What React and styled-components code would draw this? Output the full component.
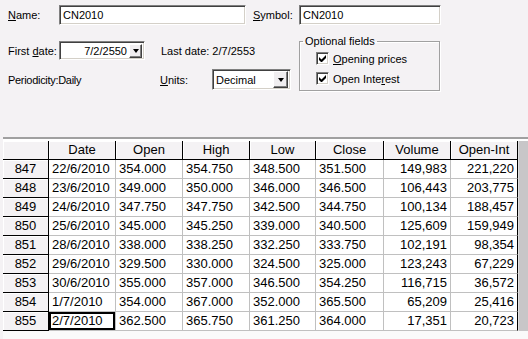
import React from 'react'
import styled, { createGlobalStyle } from 'styled-components'

const GlobalStyle = createGlobalStyle`
  html, body {
    margin: 0;
    padding: 0;
    background: #f4f2f4;
  }
  body {
    font-family: "Liberation Sans", Arial, sans-serif;
  }
`

const Window = styled.div`
  width: 528px;
  height: 339px;
  overflow: hidden;
  background: #f4f2f4;
  display: flex;
  flex-direction: column;
`

const Form = styled.div`
  height: 137px;
  flex: none;
  box-sizing: border-box;
  padding: 5px 0 0 8px;
  font-size: 11px;
  color: #000;
`

const Row = styled.div`
  display: flex;
  align-items: center;
  height: ${p => p.h || 20}px;
  margin-top: ${p => p.mt || 0}px;
`

const Label = styled.span`
  display: inline-block;
  width: ${p => (p.w ? `${p.w}px` : 'auto')};
  margin-left: ${p => p.ml || 0}px;
  letter-spacing: ${p => p.ls || 0}px;
  white-space: nowrap;
  flex: none;
`

const Sunken = styled.div`
  box-sizing: border-box;
  width: ${p => p.w}px;
  height: ${p => p.h || 20}px;
  background: #fff;
  border: 1px solid;
  border-color: #808080 #fff #fff #808080;
  box-shadow: inset 1px 1px 0 #404040, inset -1px -1px 0 #d4d0c8;
  display: flex;
  align-items: center;
  padding: 0 2px 0 3px;
  font-size: 11px;
  flex: none;
`

const DateText = styled.span`
  flex: 1;
  text-align: ${p => p.align || 'left'};
  padding-right: 2px;
`

const DropBtn = styled.div`
  box-sizing: border-box;
  width: ${p => p.w || 13}px;
  height: ${p => p.h || 14}px;
  background: #f0eef0;
  border: 1px solid;
  border-color: #fff #404040 #404040 #fff;
  box-shadow: inset -1px -1px 0 #808080;
  display: flex;
  align-items: center;
  justify-content: center;
  flex: none;
`

const Arrow = styled.span`
  width: 0;
  height: 0;
  border-left: 3.5px solid transparent;
  border-right: 3.5px solid transparent;
  border-top: 4px solid #000;
  margin-top: 1px;
`

const Lower = styled.div`
  display: flex;
  align-items: flex-start;
  margin-top: 16px;
`

const LeftBlock = styled.div`
  width: 291px;
  flex: none;
`

const Group = styled.fieldset`
  box-sizing: border-box;
  width: 141px;
  height: 56px;
  margin: -6px 0 0 0;
  padding: 0;
  border: 1px solid #a0a0a0;
  box-shadow: 1px 1px 0 #fff, inset 1px 1px 0 #fff;
  font-size: 11px;
`

const Legend = styled.legend`
  margin-left: 3px;
  padding: 0 2px;
  line-height: 13px;
`

const Check = styled.div`
  display: flex;
  align-items: center;
  height: 13px;
  padding-left: 16px;
  margin-top: ${p => p.mt}px;
`

const Box = styled.span`
  box-sizing: border-box;
  width: 13px;
  height: 13px;
  background: #fff;
  border: 1px solid;
  border-color: #808080 #fff #fff #808080;
  box-shadow: inset 1px 1px 0 #404040, inset -1px -1px 0 #d4d0c8;
  display: flex;
  align-items: center;
  justify-content: center;
  margin-right: 4px;
  flex: none;
`

const Splitter = styled.div`
  flex: none;
  margin-left: 3px;
  height: 2px;
  background: #a0a0a0;
  border-bottom: 2px solid #fff;
`

const GridArea = styled.div`
  flex: 1;
  display: flex;
  margin-left: 3px;
  background: #fafafa;
`

const Table = styled.div`
  width: 515px;
  flex: none;
  font-size: 13px;
  color: #000;
`

const Side = styled.div`
  flex: 1;
  height: 190px;
  background: #c8c6c8;
  border-left: 1px solid #e0e0e0;
`

const GridRow = styled.div`
  display: grid;
  grid-template-columns: 46px 67px 67px 67px 66px 68px 67px 67px;
  height: 19px;
`

const HeadCell = styled.div`
  box-sizing: border-box;
  background: #f4f2f4;
  border-right: 1px solid #000;
  border-bottom: 1px solid #000;
  box-shadow: inset 1px 1px 0 #fff;
  text-align: center;
  line-height: 18px;
  white-space: nowrap;
`

const Cell = styled.div`
  box-sizing: border-box;
  background: #fff;
  border-right: 1px solid ${p => (p.last ? '#000' : '#c0c0c0')};
  border-bottom: 1px solid #c0c0c0;
  padding: 0 3px;
  text-align: ${p => (p.right ? 'right' : 'left')};
  line-height: 18px;
  white-space: nowrap;
  box-shadow: ${p => (p.selected ? 'inset 0 0 0 2px #000' : 'none')};
`

const CheckMark = () => (
  <svg width="7" height="7" viewBox="0 0 7 7">
    <path d="M0 2v3l2 2h1l4-4V0L2.5 4.5z" fill="#000" />
  </svg>
)

const columns = ['Date', 'Open', 'High', 'Low', 'Close', 'Volume', 'Open-Int']

const rows = [
  [847, '22/6/2010', '354.000', '354.750', '348.500', '351.500', '149,983', '221,220'],
  [848, '23/6/2010', '349.000', '350.000', '346.000', '346.500', '106,443', '203,775'],
  [849, '24/6/2010', '347.750', '347.750', '342.500', '344.750', '100,134', '188,457'],
  [850, '25/6/2010', '345.000', '345.250', '339.000', '340.500', '125,609', '159,949'],
  [851, '28/6/2010', '338.000', '338.250', '332.250', '333.750', '102,191', '98,354'],
  [852, '29/6/2010', '329.500', '330.000', '324.500', '325.000', '123,243', '67,229'],
  [853, '30/6/2010', '355.000', '357.000', '346.500', '354.250', '116,715', '36,572'],
  [854, '1/7/2010', '354.000', '367.000', '352.000', '365.500', '65,209', '25,416'],
  [855, '2/7/2010', '362.500', '365.750', '361.250', '364.000', '17,351', '20,723'],
]

export default function App() {
  return (
    <Window>
      <GlobalStyle />
      <Form>
        <Row>
          <Label w={51}><u>N</u>ame:</Label>
          <Sunken w={187}>CN2010</Sunken>
          <Label ml={7} w={46}><u>S</u>ymbol:</Label>
          <Sunken w={142}>CN2010</Sunken>
        </Row>
        <Lower>
          <LeftBlock>
            <Row h={19}>
              <Label w={51}>First <u>d</u>ate:</Label>
              <Sunken w={86} h={19}>
                <DateText align="right">7/2/2550</DateText>
                <DropBtn w={13} h={14}><Arrow /></DropBtn>
              </Sunken>
              <Label ml={16}>Last date: 2/7/2553</Label>
            </Row>
            <Row h={21} mt={9}>
              <Label w={152} ls={-0.3}>Periodicity:Daily</Label>
              <Label w={52}><u>U</u>nits:</Label>
              <Sunken w={79} h={21}>
                <DateText>Decimal</DateText>
                <DropBtn w={15} h={17}><Arrow /></DropBtn>
              </Sunken>
            </Row>
          </LeftBlock>
          <Group>
            <Legend>Optional fields</Legend>
            <Check mt={4}>
              <Box><CheckMark /></Box>
              <span><u>O</u>pening prices</span>
            </Check>
            <Check mt={7}>
              <Box><CheckMark /></Box>
              <span>Open Inte<u>r</u>est</span>
            </Check>
          </Group>
        </Lower>
      </Form>
      <Splitter />
      <GridArea>
        <Table>
          <GridRow>
            <HeadCell />
            {columns.map(c => (
              <HeadCell key={c}>{c}</HeadCell>
            ))}
          </GridRow>
          {rows.map(r => (
            <GridRow key={r[0]}>
              <HeadCell>{r[0]}</HeadCell>
              {r.slice(1).map((v, i) => (
                <Cell
                  key={i}
                  right={i >= 5}
                  last={i === 6}
                  selected={r[0] === 855 && i === 0}
                >
                  {v}
                </Cell>
              ))}
            </GridRow>
          ))}
        </Table>
        <Side />
      </GridArea>
    </Window>
  )
}
